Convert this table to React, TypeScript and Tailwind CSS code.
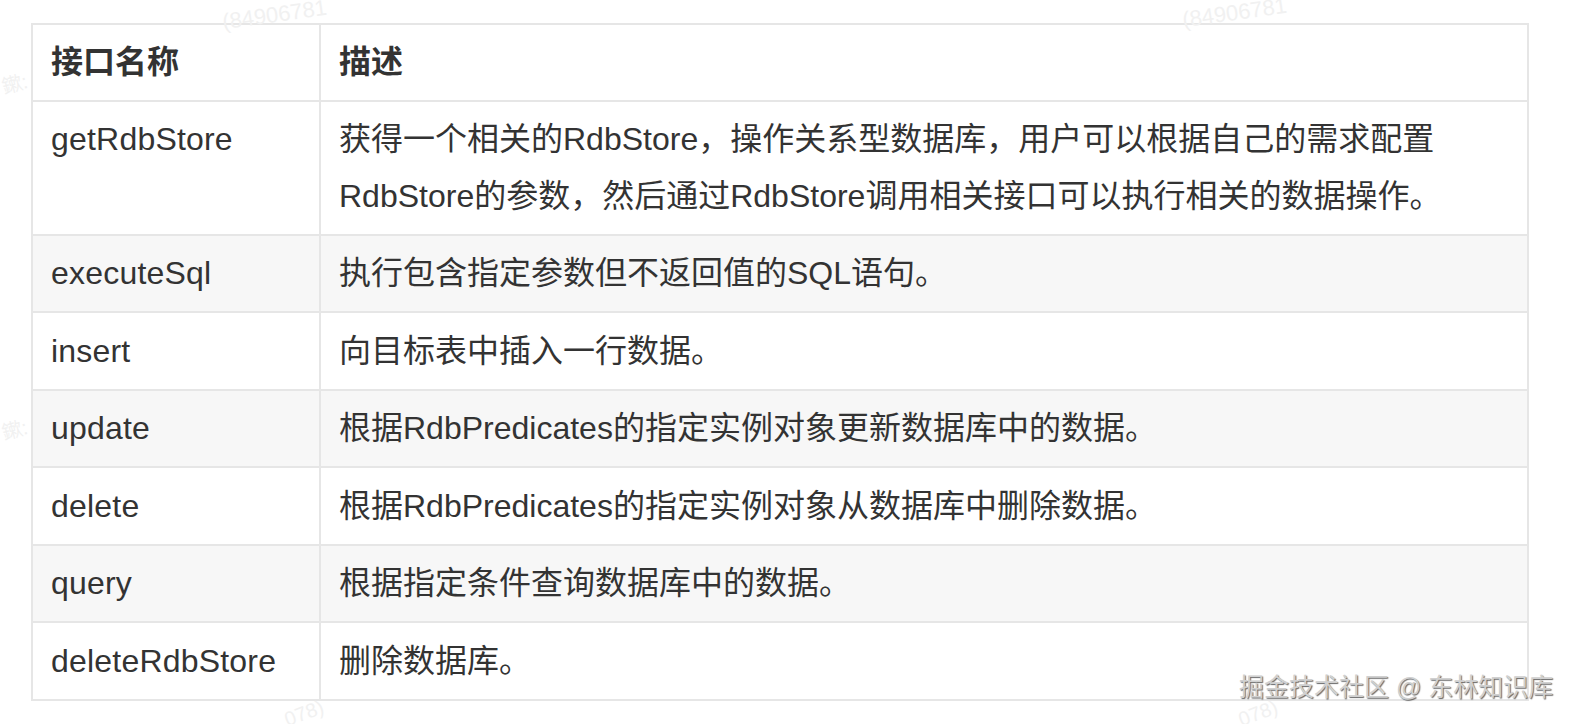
const rows = [
  {
    name: "getRdbStore",
    desc: "获得一个相关的RdbStore，操作关系型数据库，用户可以根据自己的需求配置RdbStore的参数，然后通过RdbStore调用相关接口可以执行相关的数据操作。",
  },
  { name: "executeSql", desc: "执行包含指定参数但不返回值的SQL语句。" },
  { name: "insert", desc: "向目标表中插入一行数据。" },
  { name: "update", desc: "根据RdbPredicates的指定实例对象更新数据库中的数据。" },
  { name: "delete", desc: "根据RdbPredicates的指定实例对象从数据库中删除数据。" },
  { name: "query", desc: "根据指定条件查询数据库中的数据。" },
  { name: "deleteRdbStore", desc: "删除数据库。" },
];

export default function App() {
  return (
    <div className="relative w-[1570px] h-[724px] overflow-hidden bg-white font-['Liberation_Sans','Noto_Sans_CJK_SC',sans-serif] text-[#333]">
      {/* 表格 */}
      <div className="pl-[31px] pt-[23px]">
        <table className="w-[1498px] border-collapse border-2 border-[#e6e6e6] text-[32px] leading-[56.5px]">
          <thead>
            <tr className="bg-white">
              <th className="w-[288px] border-2 border-[#e6e6e6] px-[18px] py-[9px] text-left font-bold">
                接口名称
              </th>
              <th className="border-2 border-[#e6e6e6] px-[18px] py-[9px] text-left font-bold">
                描述
              </th>
            </tr>
          </thead>
          <tbody>
            {rows.map((r, i) => (
              <tr key={r.name} className={i % 2 === 1 ? "bg-[#f7f7f7]" : "bg-white"}>
                <td className="border-2 border-[#e6e6e6] px-[18px] py-[9.5px] align-top tracking-[0.2px]">
                  {r.name}
                </td>
                <td className="border-2 border-[#e6e6e6] pl-[18px] pr-[80px] py-[9.5px] align-top">
                  {r.desc}
                </td>
              </tr>
            ))}
          </tbody>
        </table>
      </div>

      {/* 水印 */}
      <span className="pointer-events-none absolute left-[222px] top-[4px] -rotate-[8deg] text-[22px] leading-none text-[#f1f1f1]">
        (84906781
      </span>
      <span className="pointer-events-none absolute left-[1182px] top-[2px] -rotate-[8deg] text-[22px] leading-none text-[#f1f1f1]">
        (84906781
      </span>
      <span className="pointer-events-none absolute left-[284px] top-[703px] -rotate-[20deg] text-[20px] leading-none text-[#f1f1f1]">
        078)
      </span>
      <span className="pointer-events-none absolute left-[1238px] top-[703px] -rotate-[20deg] text-[20px] leading-none text-[#f1f1f1]">
        078)
      </span>
      <span className="pointer-events-none absolute left-[2px] top-[74px] -rotate-[15deg] text-[20px] leading-none text-[#f1f1f1]">
        鏉:
      </span>
      <span className="pointer-events-none absolute left-[2px] top-[420px] -rotate-[15deg] text-[20px] leading-none text-[#f1f1f1]">
        鏉:
      </span>
      <span className="absolute left-[1239px] top-[671px] text-[25px] leading-[32px] text-[#d0d0d0] [text-shadow:1px_1px_1px_rgba(0,0,0,0.6),-1px_-1px_0_rgba(255,255,255,0.8)]">
        掘金技术社区 @ 东林知识库
      </span>
    </div>
  );
}
